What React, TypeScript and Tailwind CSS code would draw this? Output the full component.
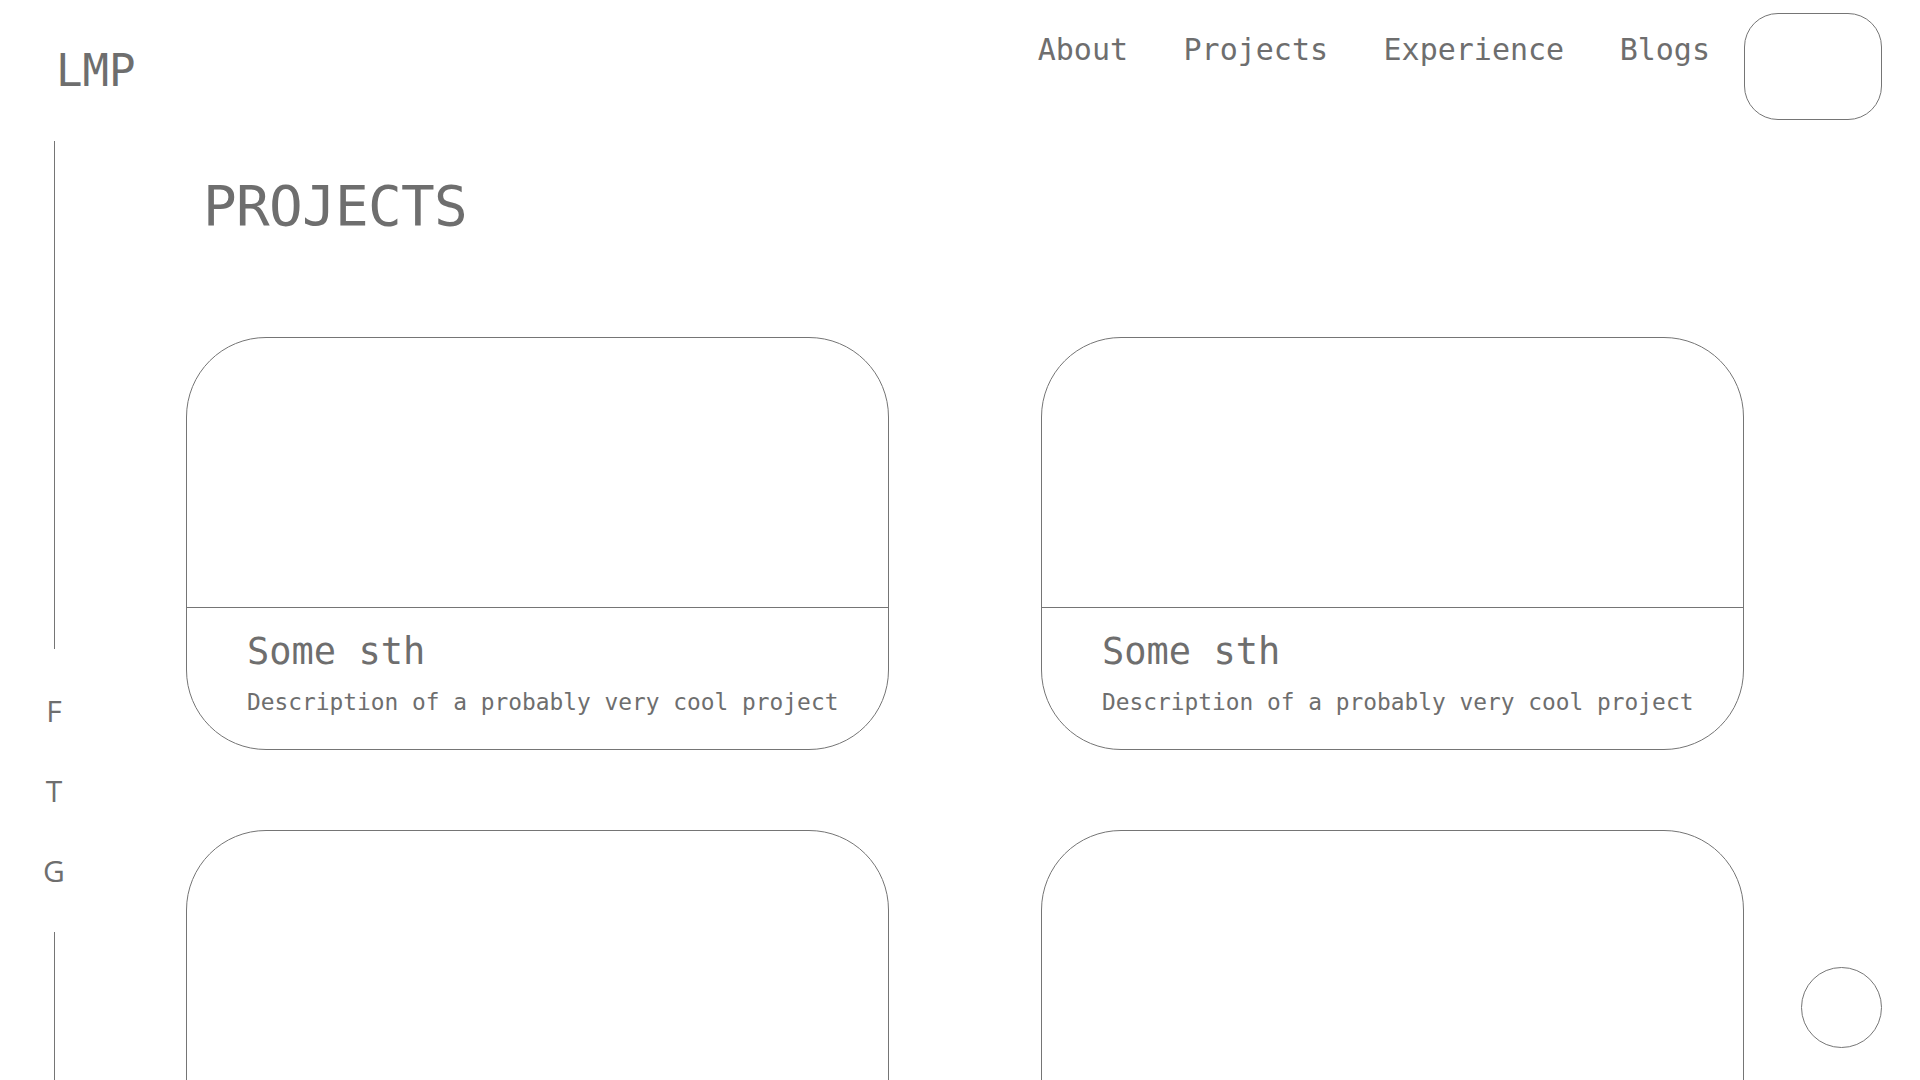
import React from "react";

const navLinks = ["About", "Projects", "Experience", "Blogs"];
const socials = ["F", "T", "G"];

const projects = [
  { title: "Some sth", desc: "Description of a probably very cool project" },
  { title: "Some sth", desc: "Description of a probably very cool project" },
  { title: "Some sth", desc: "Description of a probably very cool project" },
  { title: "Some sth", desc: "Description of a probably very cool project" },
];

const ProjectCard: React.FC<{ title: string; desc: string }> = ({ title, desc }) => (
  <div className="h-[413px] rounded-[80px] border border-[#757575] overflow-hidden flex flex-col">
    {/* image placeholder */}
    <div className="h-[270px] border-b border-[#757575]" />
    <div className="pl-[60px] pt-[25px]">
      <h3 className="text-[37px] leading-[37px] text-[#6e6e6e]">{title}</h3>
      <p className="mt-[21px] text-[22.85px] leading-[22px] text-[#6e6e6e]">{desc}</p>
    </div>
  </div>
);

const App: React.FC = () => {
  return (
    <div
      className="min-h-screen bg-white text-[#6e6e6e]"
      style={{ fontFamily: '"DejaVu Sans Mono", "Liberation Mono", monospace' }}
    >
      {/* Header */}
      <header className="flex items-start justify-between pl-[56px] pr-[38px] pt-[13px]">
        <div className="mt-[36px] text-[44px] leading-[44px]">LMP</div>
        <div className="flex items-start">
          <nav className="mt-[22px] flex items-center gap-[55.5px] text-[30px] leading-[30px]">
            {navLinks.map((link) => (
              <a key={link} href="#" className="text-[#6e6e6e]">
                {link}
              </a>
            ))}
          </nav>
          <button className="ml-[34px] w-[138px] h-[107px] rounded-[34px] border border-[#757575]" />
        </div>
      </header>

      <div className="flex">
        {/* Side bar */}
        <aside
          className="w-[108px] shrink-0 flex flex-col items-center pt-[21px]"
          style={{ fontFamily: '"Open Sans", "Noto Sans", sans-serif' }}
        >
          <div className="w-px h-[508px] bg-[#757575]" />
          <div className="mt-[47px] flex flex-col items-center gap-[50px] text-[30px] leading-[30px]">
            {socials.map((s) => (
              <span key={s}>{s}</span>
            ))}
          </div>
          <div className="mt-[46px] w-px h-[400px] bg-[#757575]" />
        </aside>

        {/* Main */}
        <main className="flex-1 pl-[78px] pr-[68px]">
          <h1 className="mt-[58px] pl-[17px] text-[56px] leading-[56px] tracking-[-0.7px]">PROJECTS</h1>
          <div className="mt-[103px] grid grid-cols-[703px_703px] gap-x-[152px] gap-y-[80px]">
            {projects.map((p, i) => (
              <ProjectCard key={i} title={p.title} desc={p.desc} />
            ))}
          </div>
        </main>
      </div>

      {/* floating circle */}
      <button className="fixed right-[38px] bottom-[32px] w-[81px] h-[81px] rounded-full border border-[#757575] bg-white" />
    </div>
  );
};

export default App;
